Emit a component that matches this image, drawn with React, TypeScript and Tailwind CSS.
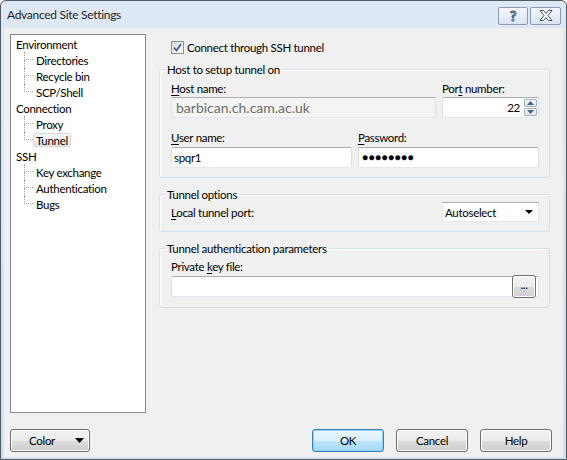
import React from 'react';

const font = "font-['Segoe_UI',Lato,sans-serif] text-[11.5px] tracking-[-0.3px] leading-[15px] text-black";

function U({ children }: { children: React.ReactNode }) {
  return <span className="underline underline-offset-[2px]">{children}</span>;
}

function WinButton({
  children,
  primary,
  spread,
  className = '',
}: {
  children: React.ReactNode;
  primary?: boolean;
  spread?: boolean;
  className?: string;
}) {
  return (
    <div
      className={
        'flex h-[23px] items-center rounded-[3px] border ' +
        (spread ? 'justify-between ' : 'justify-center ') +
        (primary
          ? 'border-[#3c7fb1] bg-[linear-gradient(#eaf6fd_0%,#d9f0fc_50%,#bee6fd_50%,#a7d9f5_100%)] shadow-[inset_0_0_0_1px_#8fd0f6]'
          : 'border-[#707070] bg-[linear-gradient(#f2f2f2_0%,#ebebeb_50%,#dddddd_50%,#cfcfcf_100%)] shadow-[inset_0_0_0_1px_#fcfcfc]') +
        ' ' +
        className
      }
    >
      {children}
    </div>
  );
}

function TextBox({ children, className = '', disabled }: { children?: React.ReactNode; className?: string; disabled?: boolean }) {
  return (
    <div
      className={
        'flex h-[21px] items-center rounded-[2px] border border-[#e3e9ef] border-t-[#abadb3] border-l-[#dbdfe6] border-r-[#dbdfe6] ' +
        (disabled ? 'bg-[#f4f4f4]' : 'bg-white') +
        ' ' +
        className
      }
    >
      {children}
    </div>
  );
}

function Group({ title, children }: { title: string; children: React.ReactNode }) {
  return (
    <fieldset className="rounded-[3px] border border-[#d5dfe5] shadow-[inset_1px_1px_0_#ffffff] pl-[11px] pr-[10px]">
      <legend className="ml-[-5px] pl-[1px] pr-[2px] leading-[15px]">{title}</legend>
      {children}
    </fieldset>
  );
}

type Node = { label: string; children?: string[] };
const tree: Node[] = [
  { label: 'Environment', children: ['Directories', 'Recycle bin', 'SCP/Shell'] },
  { label: 'Connection', children: ['Proxy', 'Tunnel'] },
  { label: 'SSH', children: ['Key exchange', 'Authentication', 'Bugs'] },
];

function Tree() {
  return (
    <div className="h-[379px] w-[136px] border border-[#828790] bg-white pl-[5px] pt-[1px]">
      {tree.map((n) => (
        <div key={n.label}>
          <div className="flex h-[16px] items-center">{n.label}</div>
          {n.children?.map((c, i) => {
            const last = i === n.children!.length - 1;
            return (
              <div key={c} className="flex h-[16px]">
                <div className="ml-[8px] flex w-[9px] flex-col">
                  <div className="h-[8px] w-[9px] border-b border-l border-dotted border-[#a0a0a0]" />
                  {!last && <div className="h-[8px] border-l border-dotted border-[#a0a0a0]" />}
                </div>
                <div
                  className={
                    'my-[1px] flex items-center ' +
                    (c === 'Tunnel'
                      ? 'rounded-[2px] border border-[#d9d9d9] bg-[linear-gradient(#f8f8f8,#e5e5e5)] px-[2px]'
                      : 'px-[3px]')
                  }
                >
                  {c}
                </div>
              </div>
            );
          })}
        </div>
      ))}
    </div>
  );
}

function Spinner() {
  return (
    <div className="mr-[1px] flex flex-col gap-[1px]">
      {[0, 1].map((k) => (
        <div
          key={k}
          className="flex h-[8px] w-[13px] items-center justify-center rounded-[1px] border border-[#a4b0c2] bg-[linear-gradient(#f3f6fb,#dde4ee)]"
        >
          <svg width="7" height="4" viewBox="0 0 7 4">
            <path d={k === 0 ? 'M0 4 L3.5 0 L7 4 Z' : 'M0 0 L3.5 4 L7 0 Z'} fill="#4d6185" />
          </svg>
        </div>
      ))}
    </div>
  );
}

export default function App() {
  return (
    <div className={'flex h-[460px] w-[567px] flex-col rounded-t-[6px] border border-[#4f5b69] bg-[linear-gradient(#dfe9f5,#cfdcec)] ' + font}>
      {/* title bar */}
      <div className="flex h-[26px] items-center justify-between pl-[6px] pr-[5px]">
        <span className="text-[12px] text-[#1e1e1e]">Advanced Site Settings</span>
        <div className="flex gap-[2px] pt-[3px]">
          <div className="flex h-[18px] w-[30px] items-center justify-center rounded-[2px] border border-[#8a9ab0] bg-[linear-gradient(#f4f8fc,#d9e4f1)]">
            <span className="text-[14px] font-bold leading-[14px] text-white [-webkit-text-stroke:1px_#45556a]">?</span>
          </div>
          <div className="flex h-[18px] w-[31px] items-center justify-center rounded-[2px] border border-[#8a9ab0] bg-[linear-gradient(#f4f8fc,#d9e4f1)]">
            <svg width="14" height="11" viewBox="0 0 14 11">
              <path
                d="M1 0.5 H4.5 L7 3.5 L9.5 0.5 H13 L9 5.5 L13 10.5 H9.5 L7 7.5 L4.5 10.5 H1 L5 5.5 Z"
                fill="#ffffff"
                stroke="#45556a"
                strokeWidth="1"
                strokeLinejoin="round"
              />
            </svg>
          </div>
        </div>
      </div>

      {/* client area */}
      <div className="mx-[2px] mb-[1px] flex flex-1 flex-col border border-[#dbe6f3] bg-[#f0f0f0] px-[6px] pt-[6px] pb-[5px]">
        <div className="flex h-[379px] gap-[13px]">
          <Tree />

          <div className="flex w-[391px] flex-col">
            <div className="mt-[7px] flex h-[13px] items-center gap-[3px] pl-[12px]">
              <div className="flex h-[13px] w-[13px] items-center justify-center border border-[#8e8f8f] bg-[linear-gradient(135deg,#dcdcdc,#fbfbfb)]">
                <svg width="9" height="9" viewBox="0 0 9 9">
                  <path d="M1 4.5 L3.5 7.5 L8 1" fill="none" stroke="#4a5f97" strokeWidth="1.8" />
                </svg>
              </div>
              <span>Connect through SSH tunnel</span>
            </div>

            <div className="mt-[8px]">
              <Group title="Host to setup tunnel on">
                <div className="grid grid-cols-[1fr_97px] gap-x-[6px] pt-[4px]">
                  <span>
                    <U>H</U>ost name:
                  </span>
                  <span>
                    Por<U>t</U> number:
                  </span>
                  <TextBox disabled className="mt-[1px] pl-[4px]">
                    <span className="text-[14px] tracking-[0px] text-[#6d6d6d]">barbican.ch.cam.ac.uk</span>
                  </TextBox>
                  <TextBox className="mt-[1px] justify-end gap-[4px]">
                    <span>22</span>
                    <Spinner />
                  </TextBox>
                </div>
                <div className="grid grid-cols-2 gap-x-[6px] pt-[12px] pb-[9px]">
                  <span>
                    <U>U</U>ser name:
                  </span>
                  <span>
                    <U>P</U>assword:
                  </span>
                  <TextBox className="mt-[2px] pl-[2px]">spqr1</TextBox>
                  <TextBox className="mt-[2px] pl-[3px]">
                    <span className="text-[10px] tracking-[0.5px]">●●●●●●●●</span>
                  </TextBox>
                </div>
              </Group>
            </div>

            <div className="mt-[9px]">
              <Group title="Tunnel options">
                <div className="mb-[9px] flex h-[20px] items-center justify-between">
                  <span>
                    <U>L</U>ocal tunnel port:
                  </span>
                  <div className="flex h-[20px] w-[97px] items-center justify-between border border-[#e3e9ef] border-t-[#abadb3] bg-white pl-[2px] pr-[5px]">
                    <span>Autoselect</span>
                    <svg width="8" height="4" viewBox="0 0 8 4">
                      <path d="M0 0 H8 L4 4 Z" fill="#000" />
                    </svg>
                  </div>
                </div>
              </Group>
            </div>

            <div className="mt-[9px]">
              <Group title="Tunnel authentication parameters">
                <div className="pt-[3px] pb-[10px]">
                  <span>
                    Private <U>k</U>ey file:
                  </span>
                  <TextBox className="mt-[2px] h-[20px] justify-end pr-[2px]">
                    <WinButton className="h-[15px] w-[24px] rounded-[2px] pb-[4px]">...</WinButton>
                  </TextBox>
                </div>
              </Group>
            </div>
          </div>
        </div>

        <div className="mt-[16px] flex items-center justify-between pr-[5px]">
          <WinButton spread className="w-[80px] pl-[18px] pr-[5px]">
            <span>Color</span>
            <svg width="9" height="5" viewBox="0 0 9 5">
              <path d="M0 0 H9 L4.5 5 Z" fill="#000" />
            </svg>
          </WinButton>
          <div className="flex gap-[12px]">
            <WinButton primary className="w-[72px]">
              OK
            </WinButton>
            <WinButton className="w-[72px]">Cancel</WinButton>
            <WinButton className="w-[72px]">Help</WinButton>
          </div>
        </div>
      </div>
    </div>
  );
}
